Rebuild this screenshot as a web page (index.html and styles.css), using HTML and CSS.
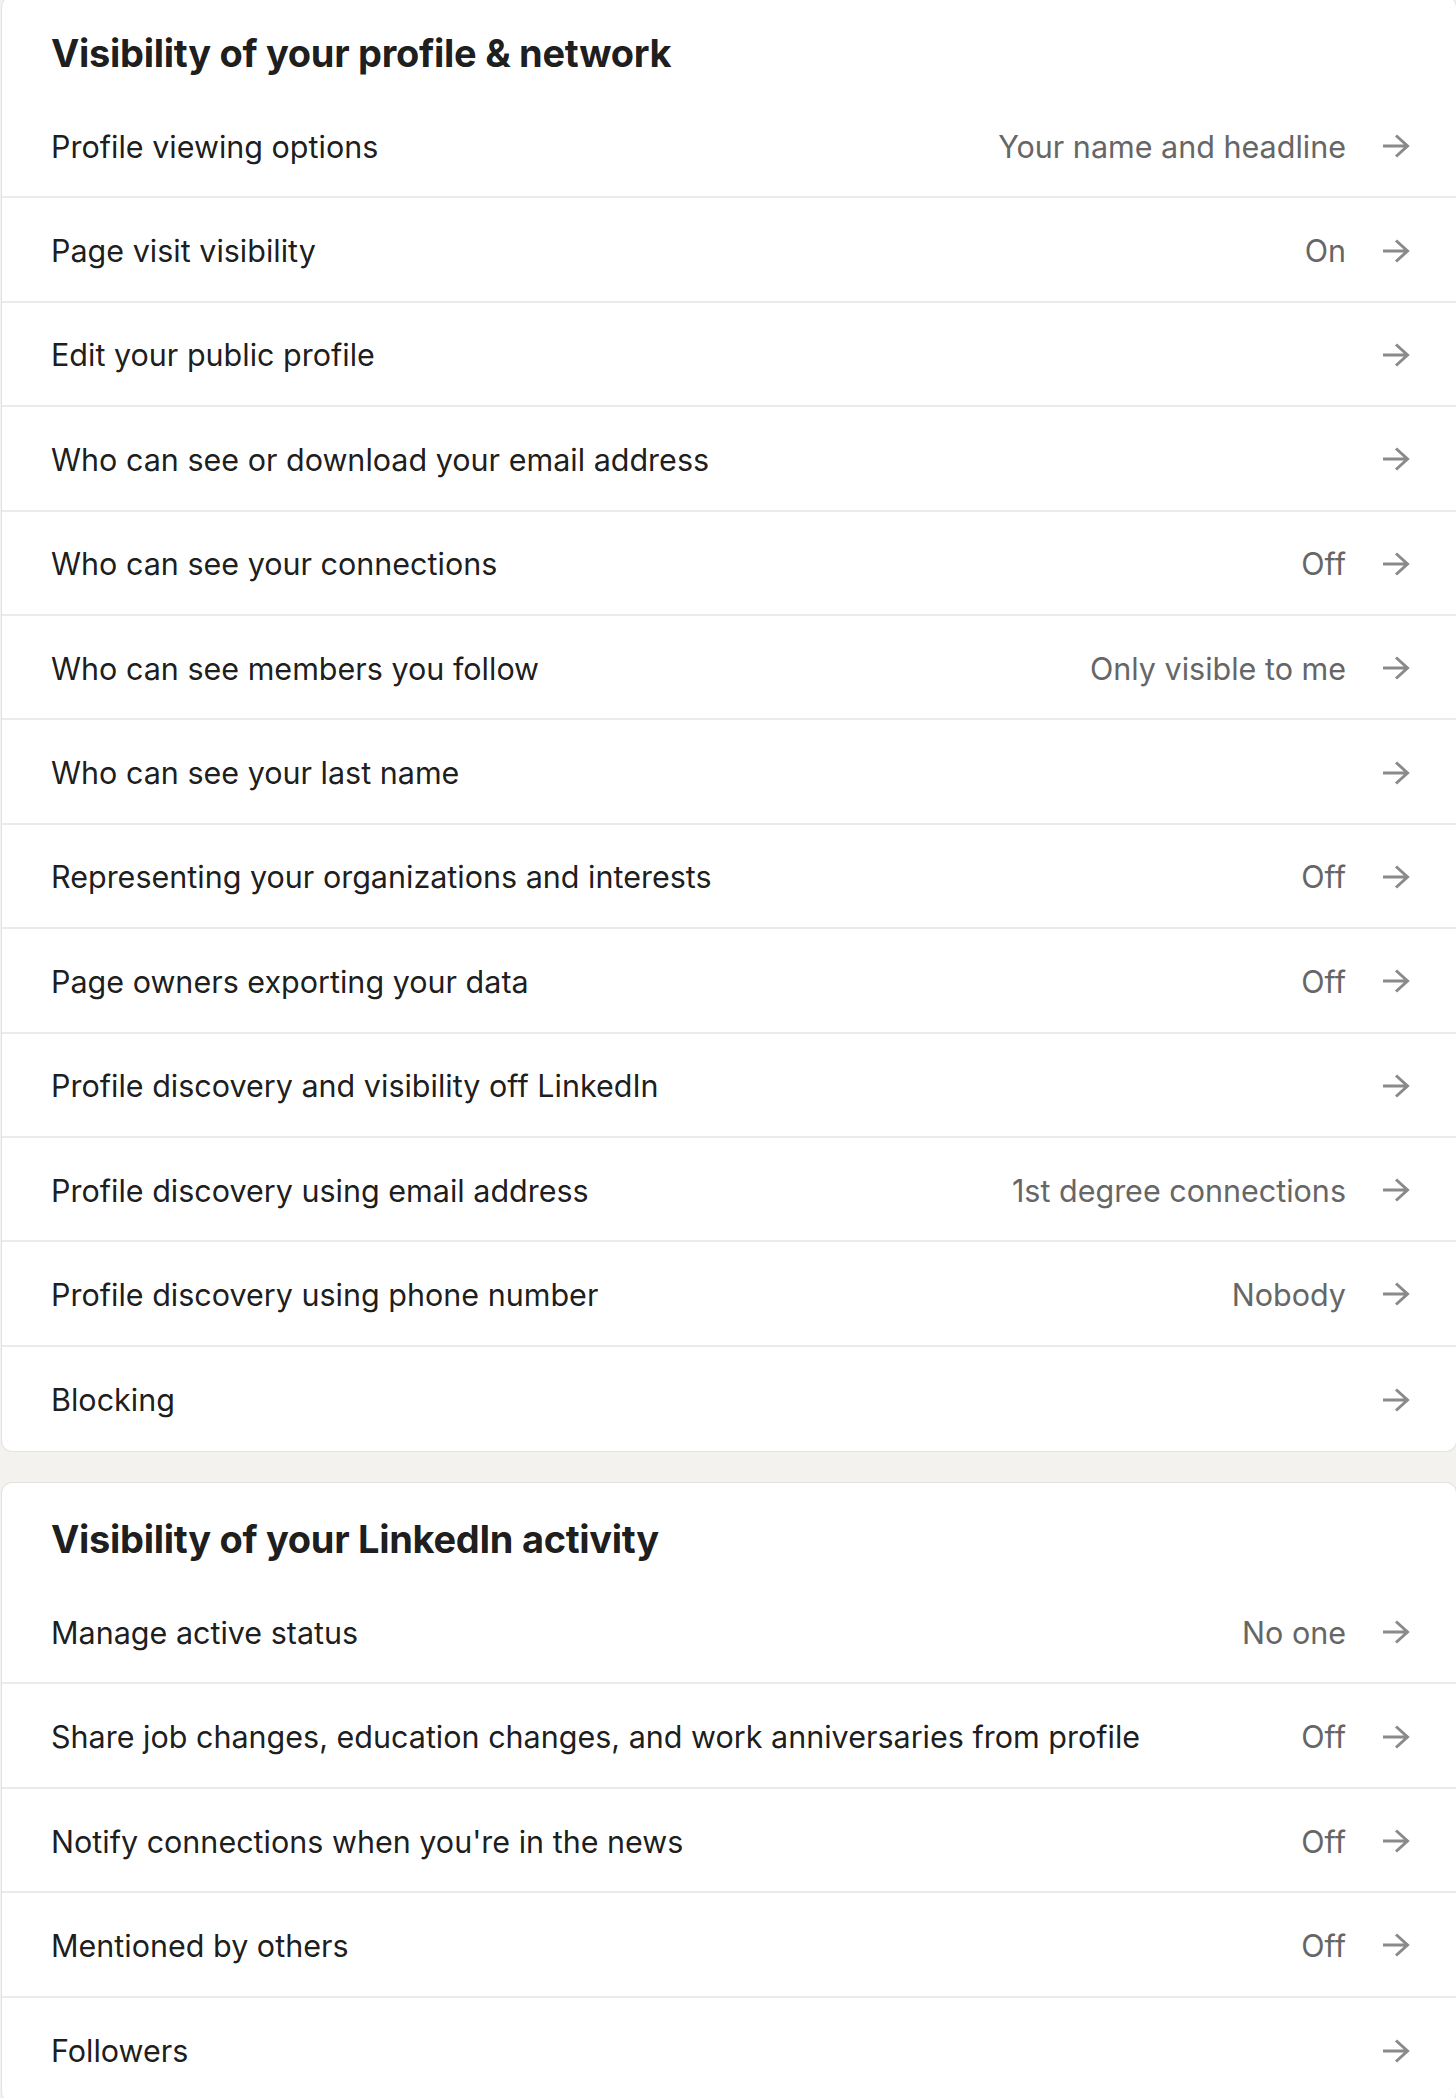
FILE: index.html
```html
<!DOCTYPE html>
<html>
<head>
<meta charset="utf-8">
<link rel="stylesheet" href="styles.css">
</head>
<body>
<div class="page">
  <section class="card card-first">
    <h2 class="card-title">Visibility of your profile &amp; network</h2>
    <ul class="list">
      <li class="row"><span class="label">Profile viewing options</span><span class="value">Your name and headline</span><span class="arrow"><svg viewBox="0 0 28 24"><path d="M1 12H25.5M14 1.5L25.5 12L14 22.5"/></svg></span></li>
      <li class="row"><span class="label">Page visit visibility</span><span class="value">On</span><span class="arrow"><svg viewBox="0 0 28 24"><path d="M1 12H25.5M14 1.5L25.5 12L14 22.5"/></svg></span></li>
      <li class="row"><span class="label">Edit your public profile</span><span class="value"></span><span class="arrow"><svg viewBox="0 0 28 24"><path d="M1 12H25.5M14 1.5L25.5 12L14 22.5"/></svg></span></li>
      <li class="row"><span class="label">Who can see or download your email address</span><span class="value"></span><span class="arrow"><svg viewBox="0 0 28 24"><path d="M1 12H25.5M14 1.5L25.5 12L14 22.5"/></svg></span></li>
      <li class="row"><span class="label">Who can see your connections</span><span class="value">Off</span><span class="arrow"><svg viewBox="0 0 28 24"><path d="M1 12H25.5M14 1.5L25.5 12L14 22.5"/></svg></span></li>
      <li class="row"><span class="label">Who can see members you follow</span><span class="value">Only visible to me</span><span class="arrow"><svg viewBox="0 0 28 24"><path d="M1 12H25.5M14 1.5L25.5 12L14 22.5"/></svg></span></li>
      <li class="row"><span class="label">Who can see your last name</span><span class="value"></span><span class="arrow"><svg viewBox="0 0 28 24"><path d="M1 12H25.5M14 1.5L25.5 12L14 22.5"/></svg></span></li>
      <li class="row"><span class="label">Representing your organizations and interests</span><span class="value">Off</span><span class="arrow"><svg viewBox="0 0 28 24"><path d="M1 12H25.5M14 1.5L25.5 12L14 22.5"/></svg></span></li>
      <li class="row"><span class="label">Page owners exporting your data</span><span class="value">Off</span><span class="arrow"><svg viewBox="0 0 28 24"><path d="M1 12H25.5M14 1.5L25.5 12L14 22.5"/></svg></span></li>
      <li class="row"><span class="label">Profile discovery and visibility off LinkedIn</span><span class="value"></span><span class="arrow"><svg viewBox="0 0 28 24"><path d="M1 12H25.5M14 1.5L25.5 12L14 22.5"/></svg></span></li>
      <li class="row"><span class="label">Profile discovery using email address</span><span class="value">1st degree connections</span><span class="arrow"><svg viewBox="0 0 28 24"><path d="M1 12H25.5M14 1.5L25.5 12L14 22.5"/></svg></span></li>
      <li class="row"><span class="label">Profile discovery using phone number</span><span class="value">Nobody</span><span class="arrow"><svg viewBox="0 0 28 24"><path d="M1 12H25.5M14 1.5L25.5 12L14 22.5"/></svg></span></li>
      <li class="row"><span class="label">Blocking</span><span class="value"></span><span class="arrow"><svg viewBox="0 0 28 24"><path d="M1 12H25.5M14 1.5L25.5 12L14 22.5"/></svg></span></li>
    </ul>
  </section>
  <section class="card">
    <h2 class="card-title">Visibility of your LinkedIn activity</h2>
    <ul class="list">
      <li class="row"><span class="label">Manage active status</span><span class="value">No one</span><span class="arrow"><svg viewBox="0 0 28 24"><path d="M1 12H25.5M14 1.5L25.5 12L14 22.5"/></svg></span></li>
      <li class="row"><span class="label">Share job changes, education changes, and work anniversaries from profile</span><span class="value">Off</span><span class="arrow"><svg viewBox="0 0 28 24"><path d="M1 12H25.5M14 1.5L25.5 12L14 22.5"/></svg></span></li>
      <li class="row"><span class="label">Notify connections when you're in the news</span><span class="value">Off</span><span class="arrow"><svg viewBox="0 0 28 24"><path d="M1 12H25.5M14 1.5L25.5 12L14 22.5"/></svg></span></li>
      <li class="row"><span class="label">Mentioned by others</span><span class="value">Off</span><span class="arrow"><svg viewBox="0 0 28 24"><path d="M1 12H25.5M14 1.5L25.5 12L14 22.5"/></svg></span></li>
      <li class="row"><span class="label">Followers</span><span class="value"></span><span class="arrow"><svg viewBox="0 0 28 24"><path d="M1 12H25.5M14 1.5L25.5 12L14 22.5"/></svg></span></li>
    </ul>
  </section>
</div>
</body>
</html>
```

FILE: styles.css
```css
html, body {
  margin: 0;
  padding: 0;
  background: #f3f2ef;
  overflow: hidden;
}
body {
  font-family: Inter, "Noto Sans", "Liberation Sans", sans-serif;
  -webkit-font-smoothing: antialiased;
}
.page {
  display: flex;
  flex-direction: column;
  gap: 32px;
  padding-left: 2px;
}
.card {
  background: #ffffff;
  border-radius: 10px;
  box-shadow: 0 0 0 1px rgba(0, 0, 0, 0.06);
}
.card-first {
  margin-top: -3px;
}
.card-title {
  margin: 0;
  padding: 34px 49px 0;
  height: 63px;
  font-size: 38px;
  line-height: 44px;
  font-weight: 700;
  color: rgba(0, 0, 0, 0.9);
  letter-spacing: -0.3px;
}
.list {
  list-style: none;
  margin: 0;
  padding: 0;
}
.row {
  box-sizing: border-box;
  height: 104.4px;
  display: flex;
  align-items: center;
  padding: 2px 46px 0 49px;
  border-bottom: 2px solid #ebebeb;
}
.row:last-child {
  border-bottom: none;
}
.label {
  flex: 1;
  font-size: 30.5px;
  color: rgba(0, 0, 0, 0.9);
}
.value {
  font-size: 30.5px;
  color: #666666;
  margin-right: 36px;
}
.arrow {
  width: 28px;
  height: 24px;
  display: flex;
  margin-top: 0;
}
.arrow svg {
  width: 28px;
  height: 24px;
  fill: none;
  stroke: #8a8a8a;
  stroke-width: 3;
}
```
